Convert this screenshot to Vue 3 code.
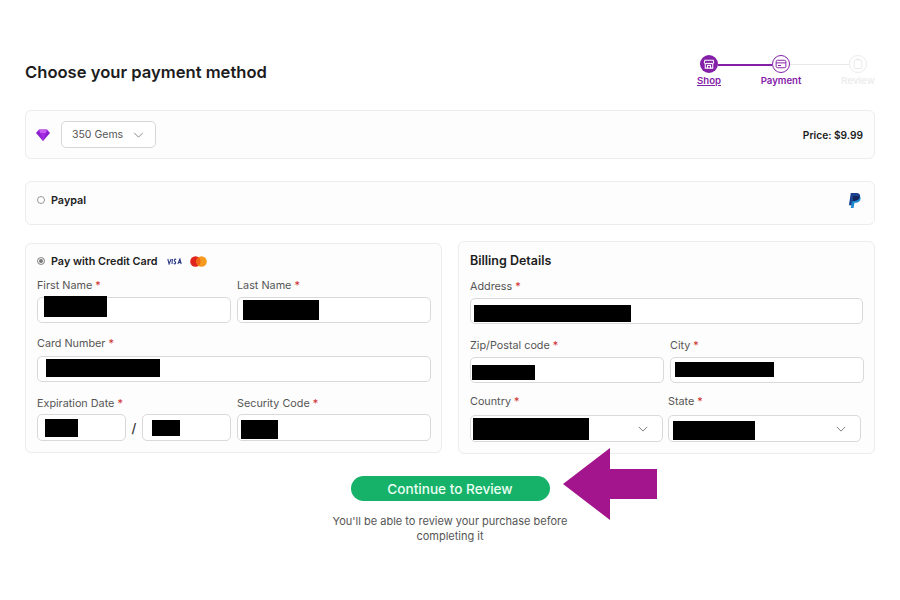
<script setup>
// redaction rectangles, offsets are relative to the field box
const box = (left, top, width, height) => ({
  left: left + 'px',
  top: top + 'px',
  width: width + 'px',
  height: height + 'px'
})
</script>

<template>
  <div class="page">
    <header class="head">
      <h1>Choose your payment method</h1>
      <div class="steps">
        <div class="step">
          <span class="dot dot-done">
            <svg viewBox="0 0 16 16" width="12" height="12" fill="none" stroke="#fff" stroke-width="1.4">
              <path d="M3 7v6.500h10V7M2.500 3h11l.8 3a1.900 1.900 0 0 1-3.200 1 2.400 2.400 0 0 1-3.100 0 2.400 2.400 0 0 1-3.100 0 1.900 1.900 0 0 1-3.200-1z" />
              <path d="M6 13.500V10h4v3.500" />
            </svg>
          </span>
          <a class="step-label shop">Shop</a>
        </div>
        <span class="line line-done"></span>
        <div class="step">
          <span class="dot dot-now">
            <svg viewBox="0 0 16 16" width="12" height="12" fill="none" stroke="#8420a8" stroke-width="1.3">
              <rect x="1.500" y="3" width="13" height="10" rx="2" />
              <path d="M1.500 6.500h13M4 10h4" />
            </svg>
          </span>
          <span class="step-label pay">Payment</span>
        </div>
        <span class="line"></span>
        <div class="step">
          <span class="dot dot-next">
            <svg viewBox="0 0 16 16" width="12" height="12" fill="none" stroke="#e8e8e8" stroke-width="1.3">
              <rect x="3" y="2.500" width="10" height="11.500" rx="1.500" />
              <path d="M6 2.500V1.500h4v1" />
            </svg>
          </span>
          <span class="step-label rev">Review</span>
        </div>
      </div>
    </header>

    <section class="card gems">
      <svg class="gem" viewBox="0 0 14 12" width="14" height="12">
        <path d="M3 .5h8L14 4 7 12 0 4z" fill="#8e1fd0" />
        <path d="M3 .5h8L10 4H4z" fill="#c65cf0" />
        <path d="M4 4h6l-3 8z" fill="#a32be0" />
      </svg>
      <div class="gem-select">
        350 Gems
        <svg viewBox="0 0 12 7" width="11" height="6" fill="none" stroke="#777" stroke-width="1"><path d="M1 1l5 5 5-5" /></svg>
      </div>
      <strong class="price">Price: $9.99</strong>
    </section>

    <section class="card paypal">
      <span class="radio"></span>
      <b class="method">Paypal</b>
      <svg class="pp" viewBox="0 0 14 16" width="13" height="15">
        <path d="M3 0h6c3 0 4.500 1.500 4 4-.6 3-3 4.500-6 4.500H5L4 13H1z" fill="#1b3f8f" />
        <path d="M5 3h5.500c2.500 0 3.500 1.500 3 3.500C13 9 11 10.500 8.500 10.500H7L6 16H3z" fill="#1f8ad0" />
        <path d="M5 3h5.500c1 0 1.800.3 2.400.8C12.500 6.800 10 8.500 7 8.500H5L4.500 10.500z" fill="#16245c" />
      </svg>
    </section>

    <div class="forms">
      <section class="card form form-left">
        <div class="card-title">
          <span class="radio radio-on"></span>
          <b class="method">Pay with Credit Card</b>
          <svg class="visa-logo" viewBox="0 0 18 8" width="15" height="7">
            <path d="M1 1l1.500 6L5 1M6.500 1 6 7M11 1.500C9 .5 8 2.500 9.500 4S10.500 7.500 8 6.500M13 7l2.500-6L17 7M13.800 5H16.500" fill="none" stroke="#2b3a86" stroke-width="1.300" />
          </svg>
          <svg class="mc" viewBox="0 0 17 11" width="17" height="11">
            <circle cx="5.500" cy="5.500" r="5.300" fill="#e0231c" />
            <circle cx="11.500" cy="5.500" r="5.300" fill="#f59a1e" />
            <path d="M8.500 1.300a5.300 5.300 0 0 1 0 8.400 5.300 5.300 0 0 1 0-8.400z" fill="#f2661a" />
          </svg>
        </div>

        <div class="row two first-row">
          <div class="field">
            <label>First Name <i>*</i></label>
            <div class="input"><span class="redact" :style="box(6, -2, 63, 21)"></span></div>
          </div>
          <div class="field">
            <label>Last Name <i>*</i></label>
            <div class="input"><span class="redact" :style="box(5, 2, 76, 20)"></span></div>
          </div>
        </div>

        <div class="row tall">
          <div class="field">
            <label>Card Number <i>*</i></label>
            <div class="input"><span class="redact" :style="box(8, 2, 114, 18)"></span></div>
          </div>
        </div>

        <div class="row two expiry-row">
          <div class="field">
            <label>Expiration Date <i>*</i></label>
            <div class="expiry">
              <div class="input"><span class="redact" :style="box(7, 4, 33, 18)"></span></div>
              <span class="slash">/</span>
              <div class="input"><span class="redact" :style="box(9, 5, 28, 16)"></span></div>
            </div>
          </div>
          <div class="field">
            <label>Security Code <i>*</i></label>
            <div class="input"><span class="redact" :style="box(3, 5, 37, 19)"></span></div>
          </div>
        </div>
      </section>

      <section class="card form form-right">
        <h2>Billing Details</h2>

        <div class="row address-row">
          <div class="field">
            <label>Address <i>*</i></label>
            <div class="input"><span class="redact" :style="box(3, 6, 157, 17)"></span></div>
          </div>
        </div>

        <div class="row two zip-row">
          <div class="field">
            <label>Zip/Postal code <i>*</i></label>
            <div class="input"><span class="redact" :style="box(1, 7, 63, 15)"></span></div>
          </div>
          <div class="field">
            <label>City <i>*</i></label>
            <div class="input"><span class="redact" :style="box(4, 4, 99, 15)"></span></div>
          </div>
        </div>

        <div class="row two country-row">
          <div class="field">
            <label>Country <i>*</i></label>
            <div class="input">
              <span class="redact" :style="box(2, 2, 116, 22)"></span>
              <svg class="chev" viewBox="0 0 12 7" width="10" height="6" fill="none" stroke="#666" stroke-width="1"><path d="M1 1l5 5 5-5" /></svg>
            </div>
          </div>
          <div class="field">
            <label>State <i>*</i></label>
            <div class="input">
              <span class="redact" :style="box(4, 5, 82, 19)"></span>
              <svg class="chev" viewBox="0 0 12 7" width="10" height="6" fill="none" stroke="#666" stroke-width="1"><path d="M1 1l5 5 5-5" /></svg>
            </div>
          </div>
        </div>
      </section>
    </div>

    <div class="actions">
      <button class="continue">Continue to Review</button>
      <p>You'll be able to review your purchase before<br />completing it</p>
      <svg class="arrow" viewBox="0 0 94 72" width="94" height="72">
        <path d="M0 36 47 0v21h47v30H47v21z" fill="#a3158c" />
      </svg>
    </div>
  </div>
</template>

<style>
body {
  background: #fff;
}
</style>

<style scoped>
.page {
  width: 900px;
  height: 600px;
  box-sizing: border-box;
  padding: 55px 25px 0;
  font-family: Inter, "Open Sans", sans-serif;
  color: #222;
  overflow: hidden;
}

.head {
  height: 55px;
  display: flex;
  justify-content: space-between;
  align-items: flex-start;
}

h1 {
  margin: 7px 0 0;
  font-size: 16.6px;
  line-height: 20px;
  font-weight: 600;
  color: #1c1c1c;
}

.steps {
  display: flex;
  align-items: flex-start;
  margin-right: 8px;
}

.step {
  width: 18px;
  display: flex;
  flex-direction: column;
  align-items: center;
}

.dot {
  width: 18px;
  height: 18px;
  box-sizing: border-box;
  border-radius: 50%;
  display: flex;
  align-items: center;
  justify-content: center;
  flex: none;
}

.dot-done {
  background: #8420a8;
}

.dot-now {
  border: 1px solid #8420a8;
}

.dot-next {
  border: 1px solid #ececec;
}

.line {
  width: 59px;
  height: 1px;
  margin-top: 9px;
  background: #e8e8e8;
}

.line-done {
  width: 54px;
  height: 2px;
  background: #8420a8;
}

.step-label {
  margin-top: 2px;
  font-size: 9.6px;
  line-height: 12px;
  font-weight: 600;
  white-space: nowrap;
}

.shop {
  color: #8420a8;
  text-decoration: underline;
}

.pay {
  color: #8420a8;
}

.rev {
  color: #ececec;
}

.card {
  box-sizing: border-box;
  background: #fdfdfd;
  border: 1px solid #ececec;
  border-radius: 6px;
}

.gems {
  height: 49px;
  display: flex;
  align-items: center;
  padding: 0 11px 0 10px;
}

.gem {
  margin-right: 11px;
}

.gem-select {
  box-sizing: border-box;
  width: 95px;
  height: 27px;
  padding-left: 10px;
  display: flex;
  align-items: center;
  gap: 10px;
  background: #fff;
  border: 1px solid #d6d6d6;
  border-radius: 5px;
  font-size: 10.5px;
  color: #555;
}

.price {
  margin-left: auto;
  font-size: 10.2px;
  font-weight: 600;
  color: #1c1c1c;
}

.paypal {
  height: 44px;
  margin-top: 22px;
  display: flex;
  align-items: center;
  padding: 0 13px 6px 11px;
}

.pp {
  margin-left: auto;
}

.radio {
  width: 8px;
  height: 8px;
  box-sizing: border-box;
  border: 1px solid #999;
  border-radius: 50%;
  flex: none;
}

.radio-on {
  background: #777;
  box-shadow: inset 0 0 0 1px #fff;
}

.method {
  margin-left: 6px;
  font-size: 10.8px;
  font-weight: 600;
  color: #222;
}

.forms {
  display: grid;
  grid-template-columns: 417px 417px;
  gap: 16px;
  align-items: start;
  margin-top: 16px;
}

.form {
  padding: 0 11px;
}

.form-left {
  height: 210px;
  margin-top: 2px;
  padding-right: 10px;
}

.form-right {
  height: 213px;
}

.card-title {
  height: 16px;
  margin-top: 9px;
  display: flex;
  align-items: center;
}

.visa-logo {
  margin-left: 10px;
}

.mc {
  margin-left: 8px;
}

h2 {
  margin: 11px 0 0;
  font-size: 12.5px;
  line-height: 16px;
  font-weight: 600;
  color: #1c1c1c;
}

.row {
  display: flex;
  gap: 6px;
}

.row .field {
  flex: 1 1 0;
  min-width: 0;
}

label {
  display: block;
  height: 16px;
  margin-bottom: 4px;
  font-size: 10.8px;
  line-height: 18px;
  color: #555;
}

label i {
  font-style: normal;
  color: #d02c2c;
}

.input {
  position: relative;
  box-sizing: border-box;
  flex: 1 1 0;
  height: 26px;
  background: #fff;
  border: 1px solid #d9d9d9;
  border-radius: 5px;
}

.redact {
  position: absolute;
  background: #000;
}

.chev {
  position: absolute;
  right: 14px;
  top: 10px;
}

.first-row {
  margin-top: 8px;
}

.tall {
  margin-top: 12px;
}

.tall label {
  margin-bottom: 5px;
}

.expiry-row {
  margin-top: 13px;
}

.expiry-row label {
  margin-bottom: 3px;
}

.expiry-row .input {
  height: 27px;
}

.expiry {
  display: flex;
  align-items: center;
}

.slash {
  width: 16px;
  text-align: center;
  font-size: 13px;
  font-weight: 500;
  color: #333;
}

.address-row {
  margin-top: 9px;
}

.zip-row {
  margin-top: 13px;
  margin-right: -1px;
}

.country-row {
  margin-top: 10px;
  width: 391px;
  gap: 5px;
}

.country-row label {
  margin-bottom: 6px;
}

.country-row .input {
  height: 27px;
}

.actions {
  position: relative;
  margin-top: 22px;
  display: flex;
  flex-direction: column;
  align-items: center;
}

.continue {
  width: 199px;
  height: 25px;
  padding: 0;
  border: 0;
  border-radius: 13px;
  background: #17b26a;
  color: #eafff3;
  font-family: inherit;
  font-size: 13.6px;
  font-weight: 500;
}

p {
  margin: 13px 0 0;
  font-size: 11px;
  line-height: 15px;
  text-align: center;
  color: #555;
}

.arrow {
  position: absolute;
  left: 538px;
  top: -28px;
}
</style>
